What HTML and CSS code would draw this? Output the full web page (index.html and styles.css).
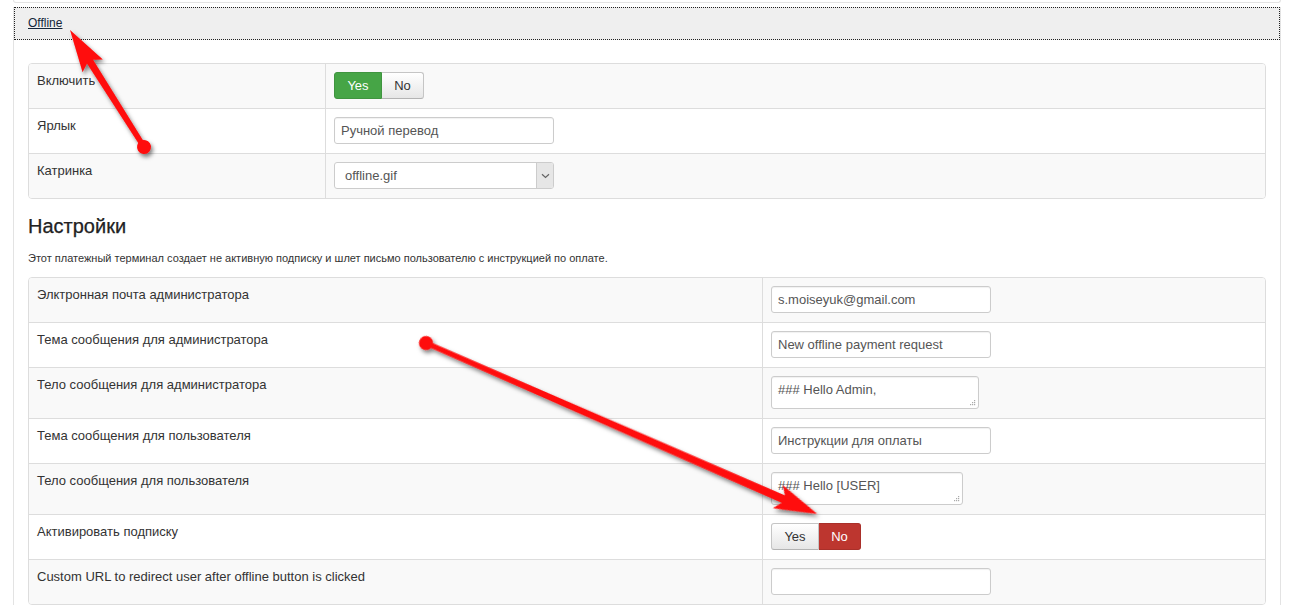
FILE: index.html
```html
<!DOCTYPE html>
<html lang="ru">
<head>
<meta charset="utf-8">
<title>Offline</title>
<link rel="stylesheet" href="styles.css">
</head>
<body>
<div class="accordion">
  <div class="prev-panel"></div>
  <div class="group">
    <div class="group-head"><a class="head-link" href="#">Offline</a></div>
    <div class="group-body">
      <div class="ftable ftable-a">
        <div class="frow">
          <div class="flabel">Включить</div>
          <div class="fctrl">
            <div class="toggle"><span class="tbtn tbtn-yes on-green">Yes</span><span class="tbtn tbtn-no">No</span></div>
          </div>
        </div>
        <div class="frow">
          <div class="flabel">Ярлык</div>
          <div class="fctrl"><input class="inp" type="text" value="Ручной перевод"></div>
        </div>
        <div class="frow">
          <div class="flabel">Катринка</div>
          <div class="fctrl">
            <div class="sel"><span class="sel-text">offline.gif</span><span class="sel-arrow"><svg width="9" height="6" viewBox="0 0 9 6"><path d="M1 1.2 L4.5 4.5 L8 1.2" fill="none" stroke="#666" stroke-width="1.2"/></svg></span></div>
          </div>
        </div>
      </div>

      <h3 class="sec-title">Настройки</h3>
      <p class="sec-desc">Этот платежный терминал создает не активную подписку и шлет письмо пользователю с инструкцией по оплате.</p>

      <div class="ftable ftable-b">
        <div class="frow">
          <div class="flabel">Элктронная почта администратора</div>
          <div class="fctrl"><input class="inp" type="text" value="s.moiseyuk@gmail.com"></div>
        </div>
        <div class="frow">
          <div class="flabel">Тема сообщения для администратора</div>
          <div class="fctrl"><input class="inp" type="text" value="New offline payment request"></div>
        </div>
        <div class="frow">
          <div class="flabel">Тело сообщения для администратора</div>
          <div class="fctrl">
            <span class="tawrap"><textarea class="ta ta-admin">### Hello Admin,</textarea><svg class="grip" width="6" height="6" viewBox="0 0 6 6"><g fill="#aaa"><rect x="4" y="0" width="1.2" height="1.2"/><rect x="2" y="2" width="1.2" height="1.2"/><rect x="4" y="2" width="1.2" height="1.2"/><rect x="0" y="4" width="1.2" height="1.2"/><rect x="2" y="4" width="1.2" height="1.2"/><rect x="4" y="4" width="1.2" height="1.2"/></g></svg></span>
          </div>
        </div>
        <div class="frow">
          <div class="flabel">Тема сообщения для пользователя</div>
          <div class="fctrl"><input class="inp" type="text" value="Инструкции для оплаты"></div>
        </div>
        <div class="frow">
          <div class="flabel">Тело сообщения для пользователя</div>
          <div class="fctrl">
            <span class="tawrap"><textarea class="ta ta-user">### Hello [USER]</textarea><svg class="grip" width="6" height="6" viewBox="0 0 6 6"><g fill="#aaa"><rect x="4" y="0" width="1.2" height="1.2"/><rect x="2" y="2" width="1.2" height="1.2"/><rect x="4" y="2" width="1.2" height="1.2"/><rect x="0" y="4" width="1.2" height="1.2"/><rect x="2" y="4" width="1.2" height="1.2"/><rect x="4" y="4" width="1.2" height="1.2"/></g></svg></span>
          </div>
        </div>
        <div class="frow">
          <div class="flabel">Активировать подписку</div>
          <div class="fctrl">
            <div class="toggle"><span class="tbtn tbtn-yes">Yes</span><span class="tbtn tbtn-no on-red">No</span></div>
          </div>
        </div>
        <div class="frow">
          <div class="flabel">Custom URL to redirect user after offline button is clicked</div>
          <div class="fctrl"><input class="inp" type="text" value=""></div>
        </div>
      </div>
    </div>
  </div>
</div>

<svg class="arrows" width="1303" height="615" viewBox="0 0 1303 615">
  <defs>
    <filter id="shadow" x="-20%" y="-20%" width="140%" height="140%">
      <feDropShadow dx="2" dy="3" stdDeviation="2" flood-color="#000" flood-opacity="0.5"/>
    </filter>
  </defs>
  <g filter="url(#shadow)" fill="#ff0a0a">
    <g transform="translate(144 147) rotate(-122.3)">
      <polygon points="0,-2.6 101,-3.6 96,-12 138.4,0 96,12 101,3.6 0,2.6"/>
      <circle cx="0" cy="0" r="7"/>
    </g>
    <g transform="translate(426 343) rotate(23.6)">
      <polygon points="0,-2.6 390,-4 384,-12.5 426.8,0 384,12.5 390,4 0,2.6"/>
      <circle cx="0" cy="0" r="7"/>
    </g>
  </g>
</svg>
</body>
</html>
```

FILE: styles.css
```css
* { box-sizing: border-box; }

html, body {
  margin: 0;
  padding: 0;
  background: #fff;
}

body {
  position: relative;
  width: 1303px;
  height: 615px;
  overflow: hidden;
  font-family: "Liberation Sans", Arial, Helvetica, sans-serif;
  font-size: 13px;
  color: #333;
}

.accordion {
  margin-left: 13px;
  width: 1268px;
}

.prev-panel {
  height: 3px;
  border: 1px solid #e3e3e3;
  border-top: none;
  border-radius: 0 0 4px 4px;
}

.group {
  margin-top: 4px;
  border-left: 1px solid #e3e3e3;
  border-right: 1px solid #e3e3e3;
}

.group-head {
  height: 33px;
  border: 1px dotted #222;
  background: #efefef;
  padding: 6px 13px 0;
  line-height: 18px;
}

.head-link {
  font-size: 12px;
  color: #14263a;
  text-decoration: underline;
}

.group-body {
  padding: 23px 14px 0 14px;
}

.ftable {
  border: 1px solid #ddd;
  border-radius: 4px;
  overflow: hidden;
}

.frow {
  display: grid;
  border-top: 1px solid #ddd;
}

.frow:first-child { border-top: none; }
.frow:nth-child(odd) { background: #f9f9f9; }
.frow:nth-child(even) { background: #fff; }

.ftable-a .frow { grid-template-columns: 296px 1fr; }
.ftable-b .frow { grid-template-columns: 733px 1fr; }

.flabel {
  padding: 8px 8px 9px;
  line-height: 18px;
  font-size: 13px;
  color: #333;
}

.fctrl {
  border-left: 1px solid #ddd;
  padding: 8px 8px 9px;
  display: flex;
  align-items: flex-start;
}

.inp {
  display: block;
  width: 220px;
  height: 27px;
  margin: 0;
  padding: 0 6px;
  border: 1px solid #ccc;
  border-radius: 3px;
  background: #fff;
  box-shadow: inset 0 1px 1px rgba(0,0,0,0.06);
  font-family: "Liberation Sans", Arial, sans-serif;
  font-size: 13px;
  color: #555;
  outline: none;
}

.sel {
  display: flex;
  width: 220px;
  height: 27px;
  border: 1px solid #ccc;
  border-radius: 3px;
  background: #fff;
  overflow: hidden;
}

.sel-text {
  flex: 1;
  padding-left: 10px;
  line-height: 25px;
  color: #555;
}

.sel-arrow {
  width: 17px;
  border-left: 1px solid #ccc;
  background: #e6e6e6;
  display: flex;
  align-items: center;
  justify-content: center;
}

.tawrap {
  position: relative;
  display: inline-block;
}

.ta {
  display: block;
  height: 33px;
  margin: 0;
  padding: 4px 6px;
  border: 1px solid #ccc;
  border-radius: 3px;
  background: #fff;
  box-shadow: inset 0 1px 1px rgba(0,0,0,0.06);
  font-family: "Liberation Sans", Arial, sans-serif;
  font-size: 13px;
  line-height: 18px;
  color: #555;
  resize: none;
  overflow: hidden;
  outline: none;
}

.ta-admin { width: 208px; }
.ta-user { width: 192px; }

.grip {
  position: absolute;
  right: 3px;
  bottom: 3px;
}

.toggle {
  display: flex;
  height: 27px;
}

.tbtn {
  display: flex;
  align-items: center;
  justify-content: center;
  height: 27px;
  font-size: 13px;
  color: #333;
  border: 1px solid #c5c5c5;
  border-bottom-color: #b3b3b3;
  background: linear-gradient(#ffffff, #e6e6e6);
}

.tbtn-yes {
  width: 48px;
  border-radius: 3px 0 0 3px;
}

.tbtn-no {
  width: 42px;
  border-left: none;
  border-radius: 0 3px 3px 0;
}

.on-green {
  background: #46a546;
  border-color: #3f943f;
  color: #fff;
}

.on-red {
  background: #bd362f;
  border-color: #a9302a;
  color: #fff;
}

.sec-title {
  margin: 15px 0 0;
  font-size: 20px;
  line-height: 24px;
  font-weight: normal;
  color: #222;
  -webkit-text-stroke: 0.25px #222;
}

.sec-desc {
  margin: 12px 0 11px;
  font-size: 11px;
  line-height: 16px;
  color: #333;
}

.arrows {
  position: absolute;
  left: 0;
  top: 0;
  pointer-events: none;
}
```
